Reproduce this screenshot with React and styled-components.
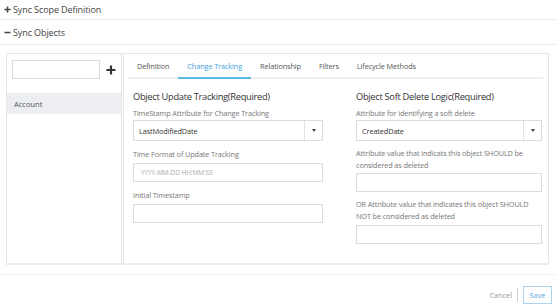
import styled, { createGlobalStyle } from 'styled-components'

const GlobalStyle = createGlobalStyle`
  body {
    margin: 0;
    background: #fff;
    font-family: "Open Sans", "Noto Sans", sans-serif;
    color: #333;
  }
  * { box-sizing: border-box; }
`;

const tabs = ["Definition", "Change Tracking", "Relationship", "Filters", "Lifecycle Methods"];

const Page = styled.div`
  width: 556px;
  height: 308px;
  display: flex;
  flex-direction: column;
`;

const SectionHeader = styled.div`
  height: ${(p) => p.h}px;
  display: flex;
  align-items: center;
  padding-left: 4px;
  gap: 2px;
  font-size: 9px;
  letter-spacing: -0.1px;
  color: #444;
  border-bottom: 1px solid #ececec;
`;

const Sign = styled.svg`
  width: 7px;
  height: 7px;
  flex: none;
`;

const Body = styled.div`
  padding: 8px 7px 9px 6px;
  border-bottom: 1px solid #f1f1f1;
`;

const Panel = styled.div`
  display: flex;
  height: 212px;
  border-bottom: 2px solid #ececec;
`;

const Sidebar = styled.div`
  width: 116px;
  border: 1px solid #e6e6e6;
  border-bottom: none;
  display: flex;
  flex-direction: column;
`;

const SearchRow = styled.div`
  display: flex;
  align-items: center;
  padding: 6px 0 0 5px;
  gap: 6px;
`;

const Input = styled.div`
  width: ${(p) => p.w || '100%'};
  height: 19px;
  border: 1px solid #dcdcdc;
  background: #fff;
  display: flex;
  align-items: center;
  padding-left: 7px;
  font-size: 6.5px;
  letter-spacing: -0.1px;
  color: #aaa;
`;

const ListItem = styled.div`
  margin-top: 14px;
  height: 21px;
  background: #eceef2;
  display: flex;
  align-items: center;
  padding-left: 7px;
  font-size: 7.5px;
  color: #555;
  position: relative;
  &::after {
    content: "";
    position: absolute;
    right: -4px;
    top: 7px;
    border-left: 4px solid #eceef2;
    border-top: 4px solid transparent;
    border-bottom: 4px solid transparent;
  }
`;

const Main = styled.div`
  flex: 1;
  border: 1px solid #e6e6e6;
  border-bottom: none;
  margin-left: 1px;
`;

const TabBar = styled.div`
  display: flex;
  margin: 0 5px 0 4px;
  border-bottom: 2px solid #efefef;
  height: 25px;
`;

const Tab = styled.div`
  padding: 0 9px;
  display: flex;
  align-items: center;
  font-size: 7.3px;
  letter-spacing: -0.1px;
  color: ${(p) => (p.active ? '#3c9fd8' : '#555')};
  border-bottom: 2px solid ${(p) => (p.active ? '#5bbde4' : 'transparent')};
  margin-bottom: -2px;
`;

const Columns = styled.div`
  display: grid;
  grid-template-columns: 190px 186px;
  column-gap: 33px;
  padding: 11px 0 0 9px;
`;

const Column = styled.div`
  display: flex;
  flex-direction: column;
`;

const Title = styled.div`
  font-size: 9.3px;
  letter-spacing: -0.3px;
  color: #333;
  line-height: 14px;
  margin-bottom: 3px;
`;

const Label = styled.div`
  font-size: 7.3px;
  letter-spacing: -0.12px;
  color: #777;
  line-height: 12px;
  margin-top: ${(p) => p.mt || 0}px;
  margin-bottom: ${(p) => (p.mb == null ? 3 : p.mb)}px;
`;

const Select = styled.div`
  height: 21px;
  border: 1px solid #dcdcdc;
  display: flex;
  align-items: center;
  font-size: 7.3px;
  letter-spacing: -0.1px;
  color: #333;
`;

const SelectText = styled.div`
  flex: 1;
  padding-left: 5px;
`;

const Caret = styled.div`
  width: 18px;
  height: 100%;
  border-left: 1px solid #e2e2e2;
  display: flex;
  align-items: center;
  justify-content: center;
  &::after {
    content: "";
    border-top: 3px solid #444;
    border-left: 2.5px solid transparent;
    border-right: 2.5px solid transparent;
  }
`;

const Footer = styled.div`
  display: flex;
  justify-content: flex-end;
  align-items: center;
  padding: 11px 4px 0 0;
  gap: 5px;
`;

const CancelLink = styled.span`
  font-size: 7.3px;
  color: #999;
`;

const Divider = styled.span`
  width: 1px;
  height: 14px;
  background: #ccc;
`;

const SaveButton = styled.div`
  width: 29px;
  height: 18px;
  border: 1px solid #a9d3ef;
  display: flex;
  align-items: center;
  justify-content: center;
  font-size: 7.3px;
  color: #5aa9e0;
`;

const Plus = () => (
  <Sign viewBox="0 0 8 8">
    <path d="M4 0.5v7M0.5 4h7" stroke="#444" strokeWidth="1.7" />
  </Sign>
);

const Minus = () => (
  <Sign viewBox="0 0 8 8">
    <path d="M0.5 4h7" stroke="#444" strokeWidth="1.7" />
  </Sign>
);

const App = () => (
  <Page>
    <GlobalStyle />
    <SectionHeader h={20}><Plus />Sync Scope Definition</SectionHeader>
    <SectionHeader h={25}><Minus />Sync Objects</SectionHeader>
    <Body>
      <Panel>
        <Sidebar>
          <SearchRow>
            <Input w="88px" />
            <svg width="10" height="10" viewBox="0 0 10 10">
              <path d="M5 0.5v9M0.5 5h9" stroke="#333" strokeWidth="2.2" />
            </svg>
          </SearchRow>
          <ListItem>Account</ListItem>
        </Sidebar>
        <Main>
          <TabBar>
            {tabs.map((t) => (
              <Tab key={t} active={t === "Change Tracking"}>{t}</Tab>
            ))}
          </TabBar>
          <Columns>
            <Column>
              <Title>Object Update Tracking(Required)</Title>
              <Label mb={1}>TimeStamp Attribute for Change Tracking</Label>
              <Select>
                <SelectText>LastModifiedDate</SelectText>
                <Caret />
              </Select>
              <Label mt={7}>Time Format of Update Tracking</Label>
              <Input>YYYY-MM-DD HH:MM:SS</Input>
              <Label mt={7}>Initial Timestamp</Label>
              <Input />
            </Column>
            <Column>
              <Title>Object Soft Delete Logic(Required)</Title>
              <Label mb={1}>Attribute for identifying a soft delete</Label>
              <Select>
                <SelectText>CreatedDate</SelectText>
                <Caret />
              </Select>
              <Label mt={6} mb={2}>Attribute value that indicats this object SHOULD be considered as deleted</Label>
              <Input />
              <Label mt={6} mb={3}>OR Attribute value that indicates this object SHOULD NOT be considered as deleted</Label>
              <Input />
            </Column>
          </Columns>
        </Main>
      </Panel>
    </Body>
    <Footer>
      <CancelLink>Cancel</CancelLink>
      <Divider />
      <SaveButton>Save</SaveButton>
    </Footer>
  </Page>
);

export default App
